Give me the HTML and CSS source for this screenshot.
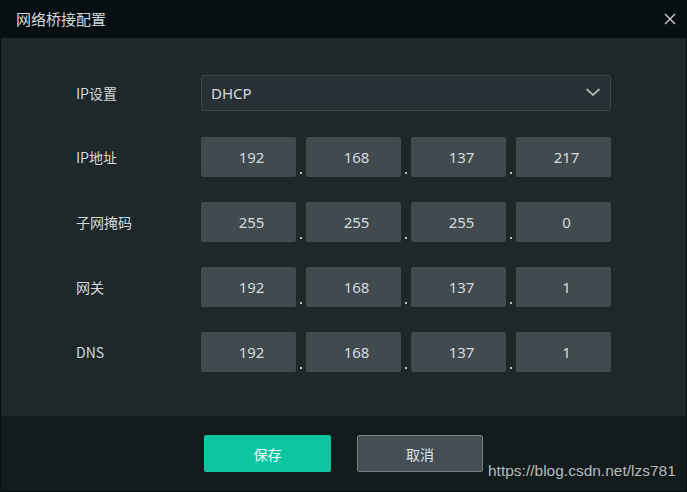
FILE: index.html
```html
<!DOCTYPE html>
<html lang="zh">
<head>
<meta charset="utf-8">
<title>网络桥接配置</title>
<link rel="stylesheet" href="styles.css">
</head>
<body>
<div class="dialog">
  <div class="titlebar">
    <span class="title">网络桥接配置</span>
    <span class="close">
      <svg width="12" height="12" viewBox="0 0 12 12"><path d="M1 1 L11 11 M11 1 L1 11" stroke="#d2d7d9" stroke-width="1.3" fill="none"/></svg>
    </span>
  </div>
  <div class="body">
    <div class="row row-select">
      <div class="label">IP设置</div>
      <div class="select">
        <span>DHCP</span>
        <svg class="chev" width="16" height="10" viewBox="0 0 16 10"><path d="M1.5 2 L8 8 L14.5 2" stroke="#a9b0b3" stroke-width="1.8" fill="none"/></svg>
      </div>
    </div>
    <div class="row">
      <div class="label">IP地址</div>
      <div class="ip">
        <div class="seg">192</div><span class="dot"></span>
        <div class="seg">168</div><span class="dot"></span>
        <div class="seg">137</div><span class="dot"></span>
        <div class="seg">217</div>
      </div>
    </div>
    <div class="row">
      <div class="label">子网掩码</div>
      <div class="ip">
        <div class="seg">255</div><span class="dot"></span>
        <div class="seg">255</div><span class="dot"></span>
        <div class="seg">255</div><span class="dot"></span>
        <div class="seg">0</div>
      </div>
    </div>
    <div class="row">
      <div class="label">网关</div>
      <div class="ip">
        <div class="seg">192</div><span class="dot"></span>
        <div class="seg">168</div><span class="dot"></span>
        <div class="seg">137</div><span class="dot"></span>
        <div class="seg">1</div>
      </div>
    </div>
    <div class="row">
      <div class="label">DNS</div>
      <div class="ip">
        <div class="seg">192</div><span class="dot"></span>
        <div class="seg">168</div><span class="dot"></span>
        <div class="seg">137</div><span class="dot"></span>
        <div class="seg">1</div>
      </div>
    </div>
  </div>
  <div class="footer">
    <button class="btn btn-save">保存</button>
    <button class="btn btn-cancel">取消</button>
    <span class="watermark">https://blog.csdn.net/lzs781</span>
  </div>
</div>
</body>
</html>
```

FILE: styles.css
```css
* { box-sizing: border-box; }
html, body { margin: 0; padding: 0; background: #070f12; }
body {
  font-family: "Noto Sans", "Noto Sans CJK SC", sans-serif;
  color: #d3d9db;
}
.dialog {
  width: 687px;
  height: 492px;
  display: flex;
  flex-direction: column;
  border: 1px solid #070f12;
  border-top: 0;
}
.titlebar {
  height: 38px;
  flex: none;
  background: #070f12;
  display: flex;
  align-items: center;
  justify-content: space-between;
  padding: 0 11px 0 16px;
  margin: 0 -1px;
}
.title {
  font-family: "Noto Sans CJK SC", sans-serif;
  font-size: 15px;
  color: #d4dadc;
  line-height: 1;
  padding-bottom: 1px;
}
.close { display: flex; align-items: center; padding-bottom: 1px; }
.body {
  height: 378px;
  flex: none;
  background: #1e2729;
  padding: 37px 0 0 75px;
  display: flex;
  flex-direction: column;
  gap: 25px;
}
.row {
  display: flex;
  align-items: center;
  height: 40px;
}
.row-select { height: 36px; margin-bottom: 1px; }
.label {
  width: 125px;
  font-family: "Noto Sans CJK SC", sans-serif;
  font-size: 14px;
  color: #d3d9db;
}
.select {
  width: 410px;
  height: 36px;
  background: #273034;
  border: 1px solid #3b464a;
  border-radius: 3px;
  display: flex;
  align-items: center;
  justify-content: space-between;
  padding: 0 9px 0 9px;
  font-size: 15px;
  color: #d5dbdd;
}
.chev { margin-top: -2px; }
.ip {
  display: flex;
  align-items: flex-end;
  height: 40px;
}
.seg {
  width: 95px;
  height: 40px;
  background: #404a4f;
  border-radius: 2px;
  display: flex;
  align-items: center;
  justify-content: center;
  padding-left: 6px;
  font-size: 15px;
  color: #d5dbdd;
}
.dot {
  width: 10px;
  height: 40px;
  display: flex;
  justify-content: center;
  align-items: flex-end;
  padding-bottom: 3px;
}
.dot::after {
  content: "";
  width: 2px;
  height: 2px;
  background: #b9c1c4;
}
.footer {
  flex: 1;
  background: #141b1d;
  position: relative;
  display: flex;
  justify-content: center;
  align-items: flex-start;
  gap: 26px;
  padding-top: 19px;
}
.btn {
  height: 37px;
  border-radius: 2px;
  font-family: "Noto Sans CJK SC", sans-serif;
  font-size: 14px;
  color: #eef3f2;
  cursor: pointer;
  padding: 0;
}
.btn-save {
  width: 127px;
  background: #0dc5a1;
  border: 0;
  color: #f3fbf9;
}
.btn-cancel {
  width: 126px;
  background: #434f55;
  border: 1px solid #737f84;
  color: #dfe5e7;
}
.watermark {
  position: absolute;
  left: 487px;
  top: 46px;
  font-family: "Liberation Sans", Arial, sans-serif;
  font-size: 15.5px;
  color: #b4bbbe;
}
```
